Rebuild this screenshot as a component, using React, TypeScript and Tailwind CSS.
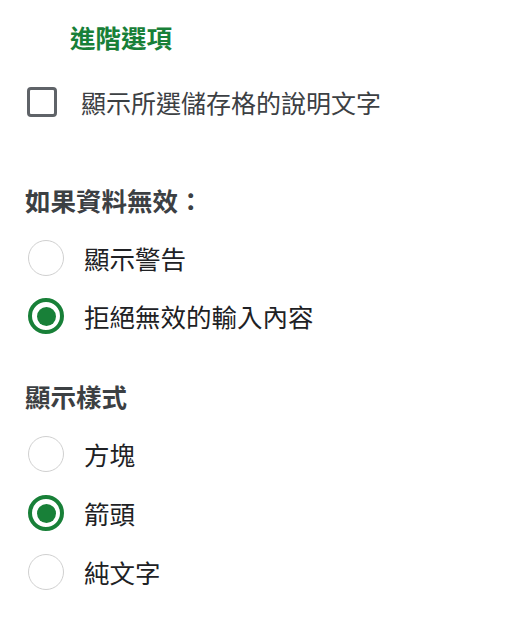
import React from "react";

const font = { fontFamily: '"Noto Sans CJK TC", "Noto Sans", sans-serif' };

function Radio({ checked, label }: { checked?: boolean; label: string }) {
  return (
    <div className="flex items-center h-[36px]">
      <div className="ml-[3px] w-[36px] h-[36px] shrink-0">
        {checked ? (
          <div className="w-[36px] h-[36px] rounded-full border-[4px] border-[#188038] flex items-center justify-center">
            <div className="w-[19px] h-[19px] rounded-full bg-[#188038]" />
          </div>
        ) : (
          <div className="w-[36px] h-[36px] rounded-full border border-[#d0d0d0]" />
        )}
      </div>
      <span className="ml-[20px] text-[25.5px] leading-[36px] text-[#202124]">{label}</span>
    </div>
  );
}

export default function App() {
  return (
    <div className="w-[510px] h-[618px] bg-white pl-[25px]" style={font}>
      <div className="pt-[19px] pl-[45px] h-[55px]">
        <div className="text-[25.5px] leading-[36px] font-bold text-[#188038]">進階選項</div>
      </div>
      <div className="mt-[29px] flex items-center h-[36px]">
        <div className="ml-[2px] w-[30px] h-[30px] rounded-[4px] border-[3px] border-[#5f6368] shrink-0" />
        <span className="ml-[24px] text-[25px] leading-[36px] text-[#3c4043]">顯示所選儲存格的說明文字</span>
      </div>
      <div className="mt-[62px] h-[36px] text-[25.5px] leading-[36px] font-bold text-[#3c4043]">如果資料無效：</div>
      <div className="mt-[22px] flex flex-col gap-[22px]">
        <Radio label="顯示警告" />
        <Radio checked label="拒絕無效的輸入內容" />
      </div>
      <div className="mt-[44px] h-[36px] text-[25.5px] leading-[36px] font-bold text-[#3c4043]">顯示樣式</div>
      <div className="mt-[22px] flex flex-col gap-[23px]">
        <Radio label="方塊" />
        <Radio checked label="箭頭" />
        <Radio label="純文字" />
      </div>
    </div>
  );
}
